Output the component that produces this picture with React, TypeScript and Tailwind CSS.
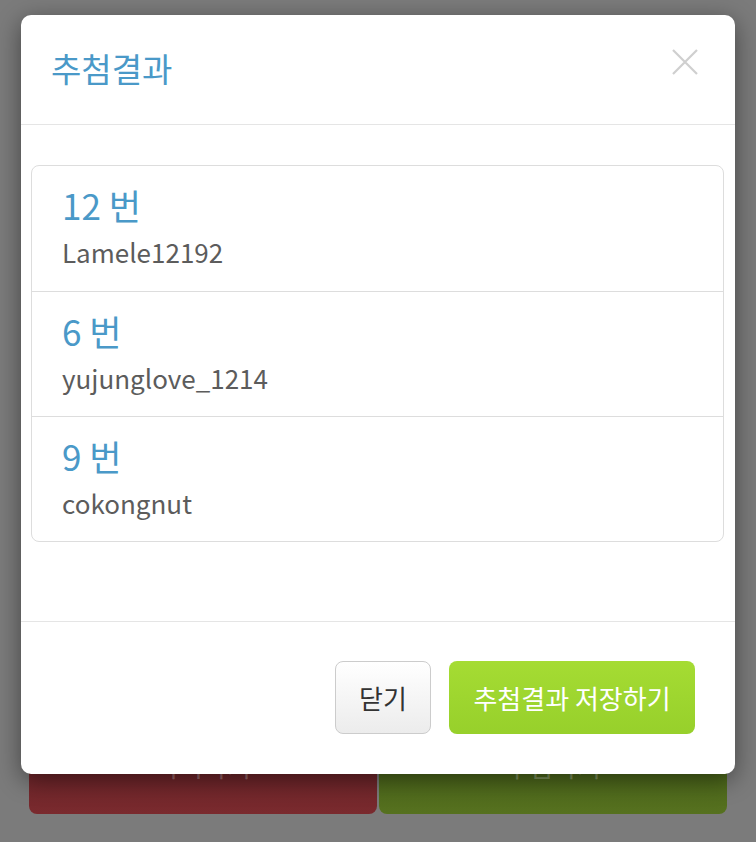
import React from "react";

const font = { fontFamily: '"Noto Sans CJK KR", "Noto Sans", sans-serif' };

const items = [
  { no: "12 번", name: "Lamele12192" },
  { no: "6 번", name: "yujunglove_1214" },
  { no: "9 번", name: "cokongnut" },
];

export default function App() {
  return (
    <div className="relative w-[756px] h-[842px] overflow-hidden bg-[#7b7b7b]" style={font}>
      {/* page content behind overlay */}
      <div className="pt-[720px] px-[29px] flex gap-[2px]">
        <div className="flex-1 h-[94px] rounded-b-[8px] bg-gradient-to-b from-[#5e1f24] to-[#7a2a2e] flex items-start justify-center pt-[26px] text-[26px] text-white/30">
          다시하기
        </div>
        <div className="flex-1 h-[94px] rounded-b-[8px] bg-gradient-to-b from-[#3f5a16] to-[#56711f] flex items-start justify-center pt-[26px] text-[26px] text-white/30">
          추첨하기
        </div>
      </div>

      {/* modal */}
      <div className="absolute left-[21px] top-[15px] w-[714px] bg-white rounded-[10px] shadow-[0_6px_24px_rgba(0,0,0,0.45)]">
        <div className="h-[110px] flex items-center justify-between pl-[30px] pr-[36px] border-b border-[#e5e5e5]">
          <h4 className="text-[33px] leading-none text-[#4a99c8] mt-[-2px]">추첨결과</h4>
          <svg width="28" height="28" viewBox="0 0 28 28" className="mt-[-16px]">
            <path d="M2 2 L26 26 M26 2 L2 26" stroke="#cfcfcf" strokeWidth="2.2" fill="none" />
          </svg>
        </div>
        <div className="pt-[40px] pb-[79px] pl-[10px] pr-[11px]">
          <div className="border border-[#dddddd] rounded-[8px]">
            {items.map((it, i) => (
              <div
                key={i}
                className={`h-[125px] pl-[30px] pt-[16px] ${i > 0 ? "border-t border-[#dddddd]" : ""}`}
              >
                <div className="text-[35px] leading-[46px] text-[#4a99c8]">{it.no}</div>
                <div className="text-[26px] leading-[48px] text-[#5c5c5c]">{it.name}</div>
              </div>
            ))}
          </div>
        </div>
        <div className="border-t border-[#e5e5e5] pt-[39px] pb-[40px] pr-[40px] flex justify-end gap-[18px]">
          <button className="w-[96px] h-[73px] rounded-[8px] border border-[#cccccc] bg-gradient-to-b from-white to-[#ececec] text-[26px] text-[#333333]">
            닫기
          </button>
          <button className="w-[246px] h-[73px] rounded-[8px] bg-gradient-to-b from-[#a5dc33] to-[#97d02b] text-[26px] text-white">
            추첨결과 저장하기
          </button>
        </div>
      </div>
    </div>
  );
}
